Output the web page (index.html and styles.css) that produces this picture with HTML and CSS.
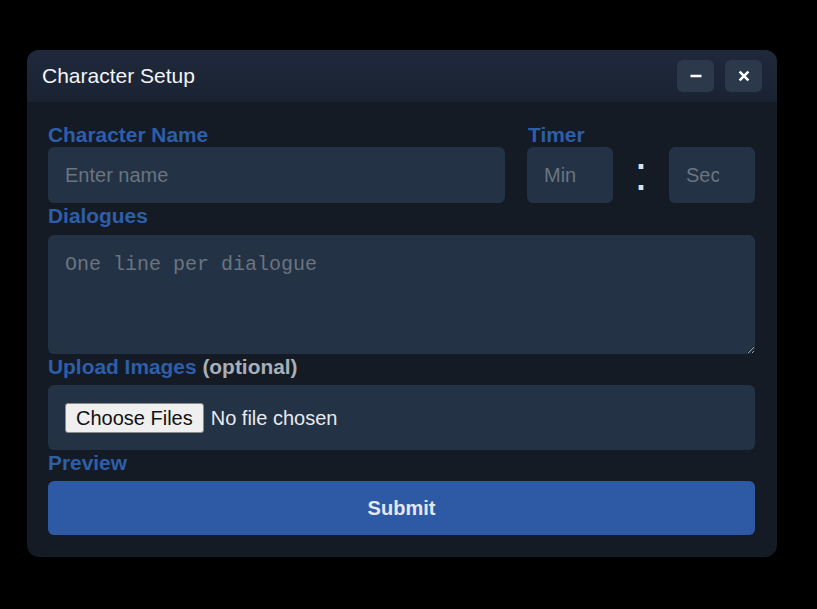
FILE: index.html
```html
<!DOCTYPE html>
<html>
<head>
<meta charset="utf-8">
<link rel="stylesheet" href="styles.css">
</head>
<body>
<div class="window">
  <div class="titlebar">
    <div class="title">Character Setup</div>
    <div class="controls">
      <button class="ctrl" aria-label="Minimize"><svg width="12" height="12" viewBox="0 0 12 12"><line x1="0.5" y1="6" x2="11.5" y2="6" stroke="#ffffff" stroke-width="2.4"/></svg></button>
      <button class="ctrl" aria-label="Close"><svg width="12" height="12" viewBox="0 0 12 12"><path d="M1.6 1.6 L10.4 10.4 M10.4 1.6 L1.6 10.4" stroke="#ffffff" stroke-width="2.6" stroke-linecap="butt"/></svg></button>
    </div>
  </div>
  <form class="content">
    <div class="row-top">
      <div class="field">
        <label class="label">Character Name</label>
        <input class="input" type="text" placeholder="Enter name">
      </div>
      <div class="field">
        <label class="label">Timer</label>
        <div class="timer">
          <input class="input small" type="number" placeholder="Min">
          <span class="colon">:</span>
          <input class="input small" type="number" placeholder="Sec">
        </div>
      </div>
    </div>
    <label class="label sec">Dialogues</label>
    <textarea class="textarea" placeholder="One line per dialogue"></textarea>
    <label class="label sec">Upload Images <span class="opt">(optional)</span></label>
    <div class="filebox"><input class="file" type="file" multiple></div>
    <label class="label sec last">Preview</label>
    <button class="submit" type="button">Submit</button>
  </form>
</div>
</body>
</html>
```
FILE: styles.css
```css
html, body {
  margin: 0;
  padding: 0;
  background: #000000;
  font-family: "Liberation Sans", Arial, sans-serif;
}
body {
  padding: 50px 0 0 27px;
}
.window {
  width: 750px;
  height: 507px;
  background: #141b25;
  border-radius: 12px;
  overflow: hidden;
  box-sizing: border-box;
}
.titlebar {
  height: 52px;
  background: linear-gradient(#1f293b, #1a2332);
  display: flex;
  align-items: center;
  justify-content: space-between;
  padding: 0 15px;
}
.title {
  color: #f3f5f8;
  font-size: 21px;
}
.controls {
  display: flex;
  gap: 11px;
}
.ctrl {
  width: 37px;
  height: 32px;
  border: none;
  border-radius: 6px;
  background: #2c394b;
  display: flex;
  align-items: center;
  justify-content: center;
  padding: 0;
}
.content {
  padding: 21px 22px 21px 21px;
  display: flex;
  flex-direction: column;
  margin: 0;
}
.row-top {
  display: grid;
  grid-template-columns: 1fr 228px;
  column-gap: 22px;
}
.field {
  display: flex;
  flex-direction: column;
}
.label {
  display: block;
  color: #2f5ea9;
  font-weight: bold;
  font-size: 20.9px;
  line-height: 24px;
  height: 24px;
}
.field:last-child .label {
  padding-left: 1px;
}
.label.sec {
  margin-top: 1px;
  margin-bottom: 7px;
}
.label.last {
  margin-bottom: 6px;
}
.opt {
  color: #a9afb8;
}
.input {
  box-sizing: border-box;
  height: 56px;
  background: #233244;
  border: none;
  border-radius: 6px;
  padding: 0 17px;
  font-family: "Liberation Sans", Arial, sans-serif;
  font-size: 20px;
  color: #e5e7eb;
  outline: none;
  width: 100%;
}
.input::placeholder, .textarea::placeholder {
  color: #6b7480;
}
.timer {
  display: flex;
  align-items: center;
}
.input.small {
  width: 86px;
  flex: none;
  padding-right: 21px;
}
.colon {
  flex: 1;
  text-align: center;
  color: #dfe3e9;
  font-size: 48px;
  line-height: 56px;
  position: relative;
  top: -1px;
}
.textarea {
  box-sizing: border-box;
  height: 119px;
  width: 100%;
  background: #233244;
  border: none;
  border-radius: 6px;
  padding: 18px 17px 16px;
  font-family: "Liberation Mono", "Courier New", monospace;
  font-size: 20px;
  color: #e5e7eb;
  outline: none;
  resize: vertical;
  display: block;
}
.filebox {
  box-sizing: border-box;
  height: 65px;
  background: #233244;
  border-radius: 6px;
  padding: 0 17px;
  display: flex;
  align-items: center;
  margin-top: -1px;
}
.file {
  font-family: "Liberation Sans", Arial, sans-serif;
  font-size: 20px;
  color: #e8eaee;
}
.file::file-selector-button {
  font-family: "Liberation Sans", Arial, sans-serif;
  font-size: 20px;
  color: #111111;
  background: #efefef;
  border: 1px solid #8a8a8a;
  border-radius: 3px;
  padding: 3px 10px 2px;
  margin-right: 7px;
}
.submit {
  height: 54px;
  border: none;
  border-radius: 6px;
  background: #2e5aa5;
  color: #e3e8ef;
  font-family: "Liberation Sans", Arial, sans-serif;
  font-weight: bold;
  font-size: 20px;
  padding: 0;
  width: 100%;
}
```
